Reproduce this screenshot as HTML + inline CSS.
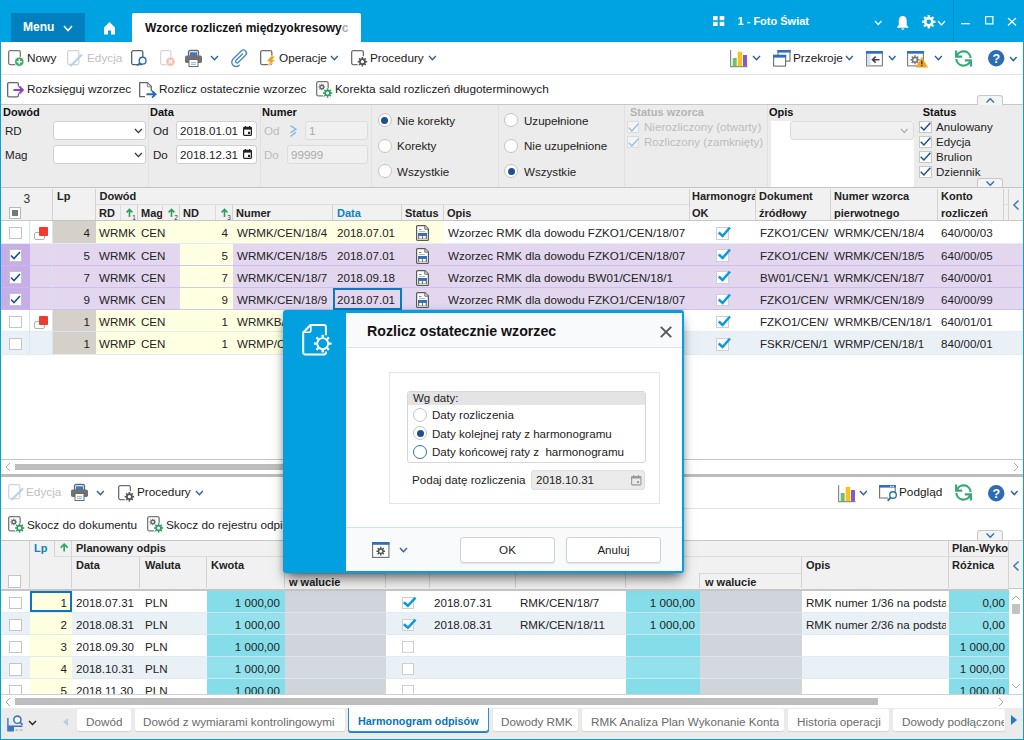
<!DOCTYPE html>
<html lang="pl">
<head>
<meta charset="utf-8">
<title>Wzorce rozliczeń międzyokresowych</title>
<style>
*{box-sizing:border-box;margin:0;padding:0}
html,body{width:1024px;height:740px;overflow:hidden;background:#fff}
body{position:relative;font-family:"Liberation Sans",sans-serif;font-size:11.6px;color:#222;line-height:1}
.a{position:absolute;white-space:nowrap}
.b{font-weight:bold;font-size:11px}
svg{position:absolute;overflow:visible}
/* title bar */
#title{left:0;top:0;width:1024px;height:42px;background:#00a3e1}
#menu{left:10.5px;top:13px;width:74px;height:29px;background:#027fbe}
#tab{left:132px;top:13px;width:229px;height:29px;background:#fff;border-radius:2px 2px 0 0}
.w{color:#fff}
/* toolbars */
.tb{font-size:11.8px;color:#1a1a1a}
.dis{color:#c0c0c0}
.hl{background:#e4e4e4;height:1px}
/* filter */
#filter{left:1px;top:104px;width:1022px;height:84px;background:#ececec;border-top:1px solid #c8c8c8}
.vs{width:1px;background:#e0e0e0;top:105px;height:82px}
.inp{background:#fff;border:1px solid #d0d0d0;border-radius:3px;height:19px}
.inpd{background:#f0f0f0;border:1px solid #dcdcdc;border-radius:3px;height:19px}
.rad{width:14px;height:14px;border-radius:50%;background:#fff;border:1px solid #c4c4c4}
.rad.on::after{content:"";position:absolute;left:2.5px;top:2.5px;width:7px;height:7px;border-radius:50%;background:#1d4f91}
.cb{width:12px;height:12px;background:#fff;border:1px solid #c8c8c8}
/* grid */
.gh{background:#f1f1f1}
.gl{background:#d2d2d2;width:1px}
.row{left:1px;width:1022px;height:22px}
.c{position:absolute;top:0;height:100%;line-height:22px;white-space:nowrap;overflow:hidden}
.r{text-align:right}
</style>
</head>
<body>
<!-- TITLE BAR -->
<div class="a" id="title"></div>
<div class="a" id="menu"></div>
<div class="a w b" style="left:23px;top:21px;font-size:12px">Menu</div>
<div class="a" id="tab"></div>
<div class="a b" style="left:145px;top:21.500px;font-size:12px;color:#111">Wzorce rozliczeń międzyokresowy<span style="color:#aaa">c</span></div>
<div class="a w b" style="left:737.5px;top:15.5px;font-size:11px">1 - Foto Świat</div>
<div class="a" style="left:953px;top:0;width:1px;height:42px;background:#0a8ccb"></div>

<!-- TOOLBAR 1 -->
<div class="a tb" style="left:27px;top:53px">Nowy</div>
<div class="a tb dis" style="left:87px;top:53px">Edycja</div>
<div class="a tb" style="left:279px;top:53px">Operacje</div>
<div class="a tb" style="left:370px;top:53px">Procedury</div>
<div class="a tb" style="left:793px;top:53px">Przekroje</div>
<div class="a hl" style="left:1px;top:74px;width:1022px"></div>
<!-- TOOLBAR 2 -->
<div class="a tb" style="left:27px;top:84px">Rozksięguj wzorzec</div>
<div class="a tb" style="left:159px;top:84px">Rozlicz ostatecznie wzorzec</div>
<div class="a tb" style="left:335px;top:84px">Korekta sald rozliczeń długoterminowych</div>

<!-- FILTER -->
<div class="a" id="filter"></div>
<!--FILTERCONTENT-->
<div class="a vs" style="left:148px"></div>
<div class="a vs" style="left:260px"></div>
<div class="a vs" style="left:371px"></div>
<div class="a vs" style="left:498px"></div>
<div class="a vs" style="left:624px"></div>
<div class="a vs" style="left:767px"></div>
<div class="a b" style="left:3px;top:107px;color:#111">Dowód</div>
<div class="a" style="left:5px;top:125px">RD</div>
<div class="a" style="left:5px;top:149px">Mag</div>
<div class="a inp" style="left:53px;top:121px;width:93px"></div>
<div class="a inp" style="left:53px;top:145px;width:93px"></div>
<div class="a b" style="left:150px;top:107px;color:#111">Data</div>
<div class="a" style="left:153px;top:125px">Od</div>
<div class="a" style="left:153px;top:149px">Do</div>
<div class="a inp" style="left:176px;top:121px;width:81px"></div>
<div class="a inp" style="left:176px;top:145px;width:81px"></div>
<div class="a" style="left:180px;top:125px">2018.01.01</div>
<div class="a" style="left:180px;top:149px">2018.12.31</div>
<div class="a b" style="left:262px;top:107px;color:#111">Numer</div>
<div class="a" style="left:264px;top:125px;color:#bbb">Od</div>
<div class="a" style="left:264px;top:149px;color:#bbb">Do</div>
<div class="a inpd" style="left:305px;top:121px;width:63px"></div>
<div class="a inpd" style="left:287px;top:145px;width:81px"></div>
<div class="a" style="left:309px;top:125px;color:#aaa">1</div>
<div class="a" style="left:291px;top:149px;color:#aaa">99999</div>
<div class="a rad on" style="left:377.600px;top:113.400px"></div>
<div class="a rad" style="left:377.600px;top:138.800px"></div>
<div class="a rad" style="left:377.600px;top:164.200px"></div>
<div class="a" style="left:397px;top:115px">Nie korekty</div>
<div class="a" style="left:397px;top:140px">Korekty</div>
<div class="a" style="left:397px;top:165.500px">Wszystkie</div>
<div class="a rad" style="left:504px;top:113.400px"></div>
<div class="a rad" style="left:504px;top:138.800px"></div>
<div class="a rad on" style="left:504px;top:164.200px"></div>
<div class="a" style="left:524px;top:115px">Uzupełnione</div>
<div class="a" style="left:524px;top:140px">Nie uzupełnione</div>
<div class="a" style="left:524px;top:165.500px">Wszystkie</div>
<div class="a b" style="left:630px;top:107px;color:#b4b4b4">Status wzorca</div>
<div class="a cb" style="left:627px;top:121px;border-color:#dcdcdc;background:#f4f4f4"></div>
<div class="a cb" style="left:627px;top:136px;border-color:#dcdcdc;background:#f4f4f4"></div>
<div class="a" style="left:644px;top:121px;color:#bcbcbc">Nierozliczony (otwarty)</div>
<div class="a" style="left:644px;top:136px;color:#bcbcbc">Rozliczony (zamknięty)</div>
<div class="a b" style="left:769px;top:107px;color:#111">Opis</div>
<div class="a" style="left:771px;top:121px;width:143px;height:67px;background:#fff"></div>
<div class="a inpd" style="left:790px;top:121px;width:124px"></div>
<div class="a b" style="left:922.700px;top:107px;color:#111">Status</div>
<div class="a cb" style="left:919.300px;top:121.3px;width:12.400px;height:12.200px"></div>
<div class="a cb" style="left:919.300px;top:136.3px;width:12.400px;height:12.200px"></div>
<div class="a cb" style="left:919.300px;top:151.3px;width:12.400px;height:12.200px"></div>
<div class="a cb" style="left:919.300px;top:166.3px;width:12.400px;height:12.200px"></div>
<div class="a" style="left:936px;top:121px">Anulowany</div>
<div class="a" style="left:936px;top:136px">Edycja</div>
<div class="a" style="left:936px;top:151px">Brulion</div>
<div class="a" style="left:936px;top:166px">Dziennik</div>
<div class="a" style="left:977px;top:95px;width:26px;height:10px;background:#f4f4f4;border:1px solid #c8c8c8;border-bottom:0;border-radius:3px 3px 0 0"></div>
<div class="a" style="left:977px;top:178px;width:26px;height:10px;background:#f4f4f4;border:1px solid #c8c8c8;border-bottom:0;border-radius:3px 3px 0 0"></div>
<!--/FILTERCONTENT-->

<!-- MAIN GRID -->
<!--MAINGRID-->
<div class="a gh" style="left:1px;top:187px;width:1022px;height:34px;border-top:1px solid #c4c4c4"></div>
<div class="a" style="left:1px;top:219.500px;width:1008px;height:2px;background:#c6c6c6"></div>
<div class="a gl" style="left:52px;top:189px;height:31px"></div>
<div class="a gl" style="left:95px;top:189px;height:31px"></div>
<div class="a gl" style="left:137px;top:205px;height:15px"></div>
<div class="a gl" style="left:179px;top:205px;height:15px"></div>
<div class="a gl" style="left:232px;top:205px;height:15px"></div>
<div class="a gl" style="left:332px;top:205px;height:15px"></div>
<div class="a gl" style="left:401px;top:205px;height:15px"></div>
<div class="a gl" style="left:443px;top:205px;height:15px"></div>
<div class="a gl" style="left:689px;top:189px;height:31px"></div>
<div class="a gl" style="left:755px;top:189px;height:31px"></div>
<div class="a gl" style="left:830px;top:189px;height:31px"></div>
<div class="a gl" style="left:937px;top:189px;height:31px"></div>
<div class="a gl" style="left:1003px;top:189px;height:31px"></div>
<div class="a gl" style="left:1008px;top:189px;height:33px"></div>
<div class="a" style="left:96px;top:204px;width:593px;height:1px;background:#dedede"></div>
<div class="a" style="left:1009px;top:220px;width:14px;height:1px;background:#c6c6c6"></div>
<div class="a" style="left:23.5px;top:192.500px;font-size:12px;color:#333">3</div>
<div class="a cb" style="left:8.600px;top:206.600px;width:12.200px;height:12.200px;border-color:#b8b8b8"></div><div class="a" style="left:11.800px;top:209.800px;width:5.800px;height:5.800px;background:#777"></div>
<div class="a b" style="left:57px;top:190.5px;color:#222;font-size:11px">Lp</div>
<div class="a b" style="left:99.5px;top:190.5px;color:#222;font-size:11px">Dowód</div>
<div class="a b" style="left:99px;top:207.5px;color:#222;font-size:11px">RD</div>
<div class="a b" style="left:141px;top:207.5px;color:#222;font-size:11px;width:21px;overflow:hidden;padding-bottom:4px">Mag</div>
<div class="a b" style="left:183px;top:207.5px;color:#222;font-size:11px">ND</div>
<div class="a b" style="left:236px;top:207.5px;color:#222;font-size:11px">Numer</div>
<div class="a b" style="left:405px;top:207.5px;color:#222;font-size:11px">Status</div>
<div class="a b" style="left:447px;top:207.5px;color:#222;font-size:11px">Opis</div>
<div class="a b" style="left:692px;top:190.5px;color:#222;font-size:11px;width:63px;overflow:hidden;padding-bottom:4px">Harmonogram</div>
<div class="a b" style="left:692px;top:207.5px;color:#222;font-size:11px">OK</div>
<div class="a b" style="left:759px;top:190.5px;color:#222;font-size:11px">Dokument</div>
<div class="a b" style="left:759px;top:207.5px;color:#222;font-size:11px">źródłowy</div>
<div class="a b" style="left:834px;top:190.5px;color:#222;font-size:11px">Numer wzorca</div>
<div class="a b" style="left:834px;top:207.5px;color:#222;font-size:11px">pierwotnego</div>
<div class="a b" style="left:941px;top:190.5px;color:#222;font-size:11px">Konto</div>
<div class="a b" style="left:941px;top:207.5px;color:#222;font-size:11px">rozliczeń</div>
<div class="a b" style="left:337px;top:207.5px;color:#0a84c8;font-size:11px">Data</div>
<div class="a row" style="top:221.3px;height:22.2px;background:#fff">
<div class="c r" style="left:52px;width:43px;background:#d5d1ca;padding-right:6px;line-height:24px">4</div>
<div class="c " style="left:95px;width:42px;background:#ffffe2;padding-left:3px;line-height:24px">WRMK</div>
<div class="c " style="left:137px;width:42px;background:#ffffe2;padding-left:3px;line-height:24px">CEN</div>
<div class="c r" style="left:179px;width:53px;background:#ffffe2;padding-right:5px;line-height:24px">4</div>
<div class="c " style="left:232px;width:100px;background:#ffffe2;padding-left:4px;line-height:24px">WRMK/CEN/18/4</div>
<div class="c " style="left:332px;width:69px;background:#ffffe2;padding-left:4px;line-height:24px">2018.07.01</div>
<div class="c " style="left:401px;width:42px;background:#ffffe2;padding-left:4px;line-height:24px"></div>
<div class="c " style="left:443px;width:246px;padding-left:4px;line-height:24px">Wzorzec RMK dla dowodu FZKO1/CEN/18/07</div>
<div class="c " style="left:755px;width:75px;padding-left:4px;width:74px;line-height:24px">FZKO1/CEN/</div>
<div class="c " style="left:830px;width:107px;padding-left:3px;line-height:24px">WRMK/CEN/18/4</div>
<div class="c " style="left:937px;width:66px;padding-left:3px;line-height:24px">640/00/03</div>
<div class="cb" style="position:absolute;left:8.3px;top:5.500px;width:12.700px;height:12.700px;border-color:#c4c4c4"></div>
<div style="position:absolute;left:33px;top:10.500px;width:11px;height:8px;border:1px solid #b0b0b0;border-radius:2px;background:#fff"></div><div style="position:absolute;left:38px;top:6.200px;width:9px;height:8.500px;background:#f0392f;border-radius:1px"></div>
<svg style="left:414.7px;top:4.100px" width="13" height="16" viewBox="0 0 13 16"><path d="M.6 1.600a1 1 0 0 1 1 -1h7.400l3.400 3.400v10.400a1 1 0 0 1 -1 1h-9.800a1 1 0 0 1 -1 -1z" fill="#fff" stroke="#5a5a5a" stroke-width="1.200"/><path d="M8.800 .8v3.400h3.400" fill="#e8e8e8" stroke="#5a5a5a" stroke-width=".9"/><rect x="3" y="4" width="2.500" height="1" fill="#888"/><rect x="3" y="6" width="6" height=".8" fill="#aaa"/><rect x="2" y="8" width="9" height="3" fill="#2f6fc0"/><rect x="2" y="10.500" width="9" height="3.500" fill="#777"/><rect x="3.200" y="11" width="2.700" height="2.600" fill="#fff"/><rect x="7" y="11" width="2.700" height="2.600" fill="#fff"/></svg>
<div style="position:absolute;left:715.2px;top:5.800px;width:12.7px;height:12.5px;border:1px solid #cfcfcf;background:#fff"></div><svg style="left:716px;top:4.700px" width="15" height="12" viewBox="0 0 15 12"><path d="M1.700 6.600 L5.600 10 L13 1.500" fill="none" stroke="#0d9be0" stroke-width="2.600"/></svg>
</div>
<div class="a" style="left:1px;top:242.5px;width:1022px;height:1px;background:#dbe7f2;opacity:.8"></div>
<div class="a row" style="top:243.5px;height:22.2px;background:#e2d7ef">
<div class="c " style="left:0px;width:29px;background:#c7aee8;padding-left:4px;line-height:24px"></div>
<div class="c r" style="left:52px;width:43px;padding-right:6px;line-height:24px">5</div>
<div class="c " style="left:95px;width:42px;padding-left:3px;line-height:24px">WRMK</div>
<div class="c " style="left:137px;width:42px;padding-left:3px;line-height:24px">CEN</div>
<div class="c r" style="left:179px;width:53px;background:#ffffe2;padding-right:5px;line-height:24px">5</div>
<div class="c " style="left:232px;width:100px;padding-left:4px;line-height:24px">WRMK/CEN/18/5</div>
<div class="c " style="left:332px;width:69px;padding-left:4px;line-height:24px">2018.07.01</div>
<div class="c " style="left:443px;width:246px;padding-left:4px;line-height:24px">Wzorzec RMK dla dowodu FZKO1/CEN/18/07</div>
<div class="c " style="left:755px;width:75px;padding-left:4px;width:74px;line-height:24px">FZKO1/CEN/</div>
<div class="c " style="left:830px;width:107px;padding-left:3px;line-height:24px">WRMK/CEN/18/5</div>
<div class="c " style="left:937px;width:66px;padding-left:3px;line-height:24px">640/00/05</div>
<div class="cb" style="position:absolute;left:8.3px;top:5.500px;width:12.700px;height:12.700px;border-color:#c4c4c4"></div>
<svg style="left:9px;top:7px" width="11" height="9" viewBox="0 0 11 9"><path d="M1 4.5 L4 7.5 L10 1" fill="none" stroke="#1d4f91" stroke-width="1.6"/></svg>
<svg style="left:414.7px;top:4.100px" width="13" height="16" viewBox="0 0 13 16"><path d="M.6 1.600a1 1 0 0 1 1 -1h7.400l3.400 3.400v10.400a1 1 0 0 1 -1 1h-9.800a1 1 0 0 1 -1 -1z" fill="#fff" stroke="#5a5a5a" stroke-width="1.200"/><path d="M8.800 .8v3.400h3.400" fill="#e8e8e8" stroke="#5a5a5a" stroke-width=".9"/><rect x="3" y="4" width="2.500" height="1" fill="#888"/><rect x="3" y="6" width="6" height=".8" fill="#aaa"/><rect x="2" y="8" width="9" height="3" fill="#2f6fc0"/><rect x="2" y="10.500" width="9" height="3.500" fill="#777"/><rect x="3.200" y="11" width="2.700" height="2.600" fill="#fff"/><rect x="7" y="11" width="2.700" height="2.600" fill="#fff"/></svg>
<div style="position:absolute;left:715.2px;top:5.800px;width:12.7px;height:12.5px;border:1px solid #cfcfcf;background:#fff"></div><svg style="left:716px;top:4.700px" width="15" height="12" viewBox="0 0 15 12"><path d="M1.700 6.600 L5.600 10 L13 1.500" fill="none" stroke="#0d9be0" stroke-width="2.600"/></svg>
</div>
<div class="a" style="left:1px;top:264.7px;width:1022px;height:1px;background:#cdb8ec;opacity:.8"></div>
<div class="a row" style="top:265.7px;height:22.2px;background:#e2d7ef">
<div class="c " style="left:0px;width:29px;background:#c7aee8;padding-left:4px;line-height:24px"></div>
<div class="c r" style="left:52px;width:43px;padding-right:6px;line-height:24px">7</div>
<div class="c " style="left:95px;width:42px;padding-left:3px;line-height:24px">WRMK</div>
<div class="c " style="left:137px;width:42px;padding-left:3px;line-height:24px">CEN</div>
<div class="c r" style="left:179px;width:53px;background:#ffffe2;padding-right:5px;line-height:24px">7</div>
<div class="c " style="left:232px;width:100px;padding-left:4px;line-height:24px">WRMK/CEN/18/7</div>
<div class="c " style="left:332px;width:69px;padding-left:4px;line-height:24px">2018.09.18</div>
<div class="c " style="left:443px;width:246px;padding-left:4px;line-height:24px">Wzorzec RMK dla dowodu BW01/CEN/18/1</div>
<div class="c " style="left:755px;width:75px;padding-left:4px;width:74px;line-height:24px">BW01/CEN/1</div>
<div class="c " style="left:830px;width:107px;padding-left:3px;line-height:24px">WRMK/CEN/18/7</div>
<div class="c " style="left:937px;width:66px;padding-left:3px;line-height:24px">640/00/01</div>
<div class="cb" style="position:absolute;left:8.3px;top:5.500px;width:12.700px;height:12.700px;border-color:#c4c4c4"></div>
<svg style="left:9px;top:7px" width="11" height="9" viewBox="0 0 11 9"><path d="M1 4.5 L4 7.5 L10 1" fill="none" stroke="#1d4f91" stroke-width="1.6"/></svg>
<svg style="left:414.7px;top:4.100px" width="13" height="16" viewBox="0 0 13 16"><path d="M.6 1.600a1 1 0 0 1 1 -1h7.400l3.400 3.400v10.400a1 1 0 0 1 -1 1h-9.800a1 1 0 0 1 -1 -1z" fill="#fff" stroke="#5a5a5a" stroke-width="1.200"/><path d="M8.800 .8v3.400h3.400" fill="#e8e8e8" stroke="#5a5a5a" stroke-width=".9"/><rect x="3" y="4" width="2.500" height="1" fill="#888"/><rect x="3" y="6" width="6" height=".8" fill="#aaa"/><rect x="2" y="8" width="9" height="3" fill="#2f6fc0"/><rect x="2" y="10.500" width="9" height="3.500" fill="#777"/><rect x="3.200" y="11" width="2.700" height="2.600" fill="#fff"/><rect x="7" y="11" width="2.700" height="2.600" fill="#fff"/></svg>
<div style="position:absolute;left:715.2px;top:5.800px;width:12.7px;height:12.5px;border:1px solid #cfcfcf;background:#fff"></div><svg style="left:716px;top:4.700px" width="15" height="12" viewBox="0 0 15 12"><path d="M1.700 6.600 L5.600 10 L13 1.500" fill="none" stroke="#0d9be0" stroke-width="2.600"/></svg>
</div>
<div class="a" style="left:1px;top:286.9px;width:1022px;height:1px;background:#cdb8ec;opacity:.8"></div>
<div class="a row" style="top:287.9px;height:22.2px;background:#e2d7ef">
<div class="c " style="left:0px;width:29px;background:#c7aee8;padding-left:4px;line-height:24px"></div>
<div class="c r" style="left:52px;width:43px;padding-right:6px;line-height:24px">9</div>
<div class="c " style="left:95px;width:42px;padding-left:3px;line-height:24px">WRMK</div>
<div class="c " style="left:137px;width:42px;padding-left:3px;line-height:24px">CEN</div>
<div class="c r" style="left:179px;width:53px;background:#ffffe2;padding-right:5px;line-height:24px">9</div>
<div class="c " style="left:232px;width:100px;padding-left:4px;line-height:24px">WRMK/CEN/18/9</div>
<div class="c " style="left:332px;width:69px;padding-left:4px;line-height:24px">2018.07.01</div>
<div class="c " style="left:443px;width:246px;padding-left:4px;line-height:24px">Wzorzec RMK dla dowodu FZKO1/CEN/18/07</div>
<div class="c " style="left:755px;width:75px;padding-left:4px;width:74px;line-height:24px">FZKO1/CEN/</div>
<div class="c " style="left:830px;width:107px;padding-left:3px;line-height:24px">WRMK/CEN/18/9</div>
<div class="c " style="left:937px;width:66px;padding-left:3px;line-height:24px">640/00/99</div>
<div class="cb" style="position:absolute;left:8.3px;top:5.500px;width:12.700px;height:12.700px;border-color:#c4c4c4"></div>
<svg style="left:9px;top:7px" width="11" height="9" viewBox="0 0 11 9"><path d="M1 4.5 L4 7.5 L10 1" fill="none" stroke="#1d4f91" stroke-width="1.6"/></svg>
<svg style="left:414.7px;top:4.100px" width="13" height="16" viewBox="0 0 13 16"><path d="M.6 1.600a1 1 0 0 1 1 -1h7.400l3.400 3.400v10.400a1 1 0 0 1 -1 1h-9.800a1 1 0 0 1 -1 -1z" fill="#fff" stroke="#5a5a5a" stroke-width="1.200"/><path d="M8.800 .8v3.400h3.400" fill="#e8e8e8" stroke="#5a5a5a" stroke-width=".9"/><rect x="3" y="4" width="2.500" height="1" fill="#888"/><rect x="3" y="6" width="6" height=".8" fill="#aaa"/><rect x="2" y="8" width="9" height="3" fill="#2f6fc0"/><rect x="2" y="10.500" width="9" height="3.500" fill="#777"/><rect x="3.200" y="11" width="2.700" height="2.600" fill="#fff"/><rect x="7" y="11" width="2.700" height="2.600" fill="#fff"/></svg>
<div style="position:absolute;left:715.2px;top:5.800px;width:12.7px;height:12.5px;border:1px solid #cfcfcf;background:#fff"></div><svg style="left:716px;top:4.700px" width="15" height="12" viewBox="0 0 15 12"><path d="M1.700 6.600 L5.600 10 L13 1.500" fill="none" stroke="#0d9be0" stroke-width="2.600"/></svg>
</div>
<div class="a" style="left:1px;top:309.1px;width:1022px;height:1px;background:#cdb8ec;opacity:.8"></div>
<div class="a row" style="top:310.1px;height:22.2px;background:#fff">
<div class="c r" style="left:52px;width:43px;background:#d5d1ca;padding-right:6px;line-height:24px">1</div>
<div class="c " style="left:95px;width:42px;background:#ffffe2;padding-left:3px;line-height:24px">WRMK</div>
<div class="c " style="left:137px;width:42px;background:#ffffe2;padding-left:3px;line-height:24px">CEN</div>
<div class="c r" style="left:179px;width:53px;background:#ffffe2;padding-right:5px;line-height:24px">1</div>
<div class="c " style="left:232px;width:100px;background:#ffffe2;padding-left:4px;line-height:24px">WRMKB/CEN/18/1</div>
<div class="c " style="left:332px;width:69px;background:#ffffe2;padding-left:4px;line-height:24px">2018.07.01</div>
<div class="c " style="left:401px;width:42px;background:#ffffe2;padding-left:4px;line-height:24px"></div>
<div class="c " style="left:443px;width:239px;padding-left:4px;line-height:24px">Wzorzec RMK dla dowodu FZKO1/CEN/18/07</div>
<div class="c " style="left:755px;width:75px;padding-left:4px;width:74px;line-height:24px">FZKO1/CEN/</div>
<div class="c " style="left:830px;width:107px;padding-left:3px;line-height:24px">WRMKB/CEN/18/1</div>
<div class="c " style="left:937px;width:66px;padding-left:3px;line-height:24px">640/01/01</div>
<div class="cb" style="position:absolute;left:8.3px;top:5.500px;width:12.700px;height:12.700px;border-color:#c4c4c4"></div>
<div style="position:absolute;left:33px;top:10.500px;width:11px;height:8px;border:1px solid #b0b0b0;border-radius:2px;background:#fff"></div><div style="position:absolute;left:38px;top:6.200px;width:9px;height:8.500px;background:#f0392f;border-radius:1px"></div>
<svg style="left:414.7px;top:4.100px" width="13" height="16" viewBox="0 0 13 16"><path d="M.6 1.600a1 1 0 0 1 1 -1h7.400l3.400 3.400v10.400a1 1 0 0 1 -1 1h-9.800a1 1 0 0 1 -1 -1z" fill="#fff" stroke="#5a5a5a" stroke-width="1.200"/><path d="M8.800 .8v3.400h3.400" fill="#e8e8e8" stroke="#5a5a5a" stroke-width=".9"/><rect x="3" y="4" width="2.500" height="1" fill="#888"/><rect x="3" y="6" width="6" height=".8" fill="#aaa"/><rect x="2" y="8" width="9" height="3" fill="#2f6fc0"/><rect x="2" y="10.500" width="9" height="3.500" fill="#777"/><rect x="3.200" y="11" width="2.700" height="2.600" fill="#fff"/><rect x="7" y="11" width="2.700" height="2.600" fill="#fff"/></svg>
<div style="position:absolute;left:715.2px;top:5.800px;width:12.7px;height:12.5px;border:1px solid #cfcfcf;background:#fff"></div><svg style="left:716px;top:4.700px" width="15" height="12" viewBox="0 0 15 12"><path d="M1.700 6.600 L5.600 10 L13 1.500" fill="none" stroke="#0d9be0" stroke-width="2.600"/></svg>
</div>
<div class="a" style="left:1px;top:331.3px;width:1022px;height:1px;background:#dbe7f2;opacity:.8"></div>
<div class="a row" style="top:332.3px;height:22.2px;background:#e9f1f6">
<div class="c r" style="left:52px;width:43px;background:#d5d1ca;padding-right:6px;line-height:24px">1</div>
<div class="c " style="left:95px;width:42px;background:#ffffe2;padding-left:3px;line-height:24px">WRMP</div>
<div class="c " style="left:137px;width:42px;background:#ffffe2;padding-left:3px;line-height:24px">CEN</div>
<div class="c r" style="left:179px;width:53px;background:#ffffe2;padding-right:5px;line-height:24px">1</div>
<div class="c " style="left:232px;width:100px;background:#ffffe2;padding-left:4px;line-height:24px">WRMP/CEN/18/1</div>
<div class="c " style="left:332px;width:69px;background:#ffffe2;padding-left:4px;line-height:24px">2018.07.01</div>
<div class="c " style="left:401px;width:42px;background:#ffffe2;padding-left:4px;line-height:24px"></div>
<div class="c " style="left:443px;width:239px;padding-left:4px;line-height:24px">Wzorzec RMK dla dowodu FSKR/CEN/18/1</div>
<div class="c " style="left:755px;width:75px;padding-left:4px;width:74px;line-height:24px">FSKR/CEN/1</div>
<div class="c " style="left:830px;width:107px;padding-left:3px;line-height:24px">WRMP/CEN/18/1</div>
<div class="c " style="left:937px;width:66px;padding-left:3px;line-height:24px">840/00/01</div>
<div class="cb" style="position:absolute;left:8.3px;top:5.500px;width:12.700px;height:12.700px;border-color:#c4c4c4"></div>
<svg style="left:414.7px;top:4.100px" width="13" height="16" viewBox="0 0 13 16"><path d="M.6 1.600a1 1 0 0 1 1 -1h7.400l3.400 3.400v10.400a1 1 0 0 1 -1 1h-9.800a1 1 0 0 1 -1 -1z" fill="#fff" stroke="#5a5a5a" stroke-width="1.200"/><path d="M8.800 .8v3.400h3.400" fill="#e8e8e8" stroke="#5a5a5a" stroke-width=".9"/><rect x="3" y="4" width="2.500" height="1" fill="#888"/><rect x="3" y="6" width="6" height=".8" fill="#aaa"/><rect x="2" y="8" width="9" height="3" fill="#2f6fc0"/><rect x="2" y="10.500" width="9" height="3.500" fill="#777"/><rect x="3.200" y="11" width="2.700" height="2.600" fill="#fff"/><rect x="7" y="11" width="2.700" height="2.600" fill="#fff"/></svg>
<div style="position:absolute;left:715.2px;top:5.800px;width:12.7px;height:12.5px;border:1px solid #cfcfcf;background:#fff"></div><svg style="left:716px;top:4.700px" width="15" height="12" viewBox="0 0 15 12"><path d="M1.700 6.600 L5.600 10 L13 1.500" fill="none" stroke="#0d9be0" stroke-width="2.600"/></svg>
</div>
<div class="a" style="left:1px;top:353.5px;width:1022px;height:1px;background:#dbe7f2;opacity:.8"></div>
<div class="a" style="left:29px;top:221.3px;width:1px;height:22.2px;background:#d6e6f5"></div>
<div class="a" style="left:52px;top:221.3px;width:1px;height:22.2px;background:#d6e6f5"></div>
<div class="a" style="left:29px;top:310.1px;width:1px;height:44.4px;background:#d6e6f5"></div>
<div class="a" style="left:52px;top:310.1px;width:1px;height:44.4px;background:#d6e6f5"></div>
<div class="a" style="left:52px;top:243.500px;width:1px;height:66.600px;background:#d9dff2;opacity:.7"></div>
<div class="a" style="left:333px;top:287.900px;width:69px;height:22.200px;border:2.500px solid #0c79be"></div>
<svg style="left:1013px;top:200px" width="6" height="10" viewBox="0 0 6 10"><path d="M5.500 .5 L.9 5 L5.500 9.500" fill="none" stroke="#3a78c0" stroke-width="1.500"/></svg>
<div class="a" style="left:1004px;top:204px;width:4px;height:1px;background:#dedede"></div>
<div class="a" style="left:1px;top:459px;width:1022px;height:1px;background:#c4c4c4"></div>
<div class="a" style="left:15px;top:463.500px;width:600px;height:6.300px;background:#bdbdbd"></div>
<svg style="left:5px;top:462px" width="6" height="10" viewBox="0 0 6 10"><path d="M5 1 L1 5 L5 9" fill="none" stroke="#aaa" stroke-width="1"/></svg>
<svg style="left:1013px;top:462px" width="6" height="10" viewBox="0 0 6 10"><path d="M1 1 L5 5 L1 9" fill="none" stroke="#aaa" stroke-width="1"/></svg>
<div class="a" style="left:1px;top:474px;width:1022px;height:3px;background:#bdbdbd"></div>
<!--/MAINGRID-->

<!-- BOTTOM -->
<!--BOTTOM-->
<div class="a tb dis" style="left:26px;top:487px">Edycja</div>
<div class="a tb" style="left:137px;top:487px">Procedury</div>
<div class="a tb" style="left:899px;top:487px">Podgląd</div>
<div class="a hl" style="left:1px;top:508px;width:1022px"></div>
<div class="a tb" style="left:27px;top:519.5px">Skocz do dokumentu</div>
<div class="a tb" style="left:166px;top:519.5px">Skocz do rejestru odpisów</div>
<div class="a" style="left:977px;top:530px;width:26px;height:10px;background:#f4f4f4;border:1px solid #c8c8c8;border-bottom:0;border-radius:3px 3px 0 0"></div>
<div class="a gh" style="left:1px;top:539.500px;width:1022px;height:49.500px;border-top:1px solid #c8c8c8"></div>
<div class="a" style="left:1px;top:588.500px;width:1008px;height:2px;background:#c6c6c6"></div>
<div class="a" style="left:1009px;top:588px;width:14px;height:1px;background:#c6c6c6"></div>
<div class="a gl" style="left:29px;top:541px;height:47px"></div>
<div class="a gl" style="left:54px;top:541px;height:16px"></div>
<div class="a gl" style="left:71px;top:541px;height:47px"></div>
<div class="a gl" style="left:139px;top:557px;height:31px"></div>
<div class="a gl" style="left:206px;top:557px;height:31px"></div>
<div class="a gl" style="left:284px;top:573px;height:15px"></div>
<div class="a gl" style="left:385px;top:541px;height:47px"></div>
<div class="a gl" style="left:429px;top:557px;height:31px"></div>
<div class="a gl" style="left:515px;top:557px;height:31px"></div>
<div class="a gl" style="left:625px;top:557px;height:31px"></div>
<div class="a gl" style="left:699px;top:573px;height:15px"></div>
<div class="a gl" style="left:801px;top:557px;height:31px"></div>
<div class="a gl" style="left:948px;top:541px;height:47px"></div>
<div class="a gl" style="left:1008px;top:541px;height:49px"></div>
<div class="a" style="left:54px;top:556px;width:954px;height:1px;background:#dcdcdc"></div>
<div class="a" style="left:285px;top:572.500px;width:100px;height:1px;background:#dcdcdc"></div>
<div class="a" style="left:700px;top:572.500px;width:101px;height:1px;background:#dcdcdc"></div>
<div class="a b" style="left:34px;top:543px;color:#0a84c8;font-size:11px">Lp</div>
<svg style="left:59.500px;top:543.300px" width="8.400" height="9" viewBox="0 0 8.400 9"><path d="M4.200 8.600V1.200M.7 4.700 L4.200 1.200 L7.700 4.700" fill="none" stroke="#35a46a" stroke-width="1.700"/></svg>
<div class="a b" style="left:76px;top:543px;color:#222;font-size:11px">Planowany odpis</div>
<div class="a b" style="left:76px;top:560px;color:#222;font-size:11px">Data</div>
<div class="a b" style="left:145px;top:560px;color:#222;font-size:11px">Waluta</div>
<div class="a b" style="left:211px;top:560px;color:#222;font-size:11px">Kwota</div>
<div class="a b" style="left:289px;top:577px;color:#222;font-size:11px">w walucie</div>
<div class="a b" style="left:705px;top:577px;color:#222;font-size:11px">w walucie</div>
<div class="a b" style="left:806px;top:560px;color:#222;font-size:11px">Opis</div>
<div class="a b" style="left:952px;top:560px;color:#222;font-size:11px">Różnica</div>
<div class="a b" style="left:952px;top:543px;color:#222;font-size:11px;width:56px;overflow:hidden;padding-bottom:4px">Plan-Wykonanie</div>
<div class="a cb" style="left:8px;top:575px;width:13px;height:13px;border-color:#c4c4c4"></div>
<svg style="left:1013px;top:560.500px" width="6" height="10" viewBox="0 0 6 10"><path d="M5.500 .5 L.9 5 L5.500 9.500" fill="none" stroke="#3a78c0" stroke-width="1.500"/></svg>
<div class="a" style="left:1px;top:590.500px;width:1008px;height:103.500px;overflow:hidden">
<div class="a row" style="left:0;top:0.0px;width:1008px;height:22.2px;background:#fff">
<div class="c r" style="left:29px;width:42px;background:#ffffe2;padding-right:5px;line-height:23px">1</div>
<div class="c " style="left:71px;width:68px;padding-left:4px;line-height:23px">2018.07.31</div>
<div class="c " style="left:139px;width:67px;padding-left:5px;line-height:23px">PLN</div>
<div class="c r" style="left:206px;width:78px;background:#84dde9;padding-right:5px;line-height:23px">1 000,00</div>
<div class="c " style="left:284px;width:101px;background:#cfd5db;padding-left:5px;line-height:23px"></div>
<div class="c " style="left:429px;width:86px;padding-left:4px;line-height:23px">2018.07.31</div>
<div class="c " style="left:515px;width:110px;padding-left:4px;line-height:23px">RMK/CEN/18/7</div>
<div class="c r" style="left:625px;width:74px;background:#84dde9;padding-right:5px;line-height:23px">1 000,00</div>
<div class="c " style="left:699px;width:102px;background:#cfd5db;padding-left:5px;line-height:23px"></div>
<div class="c " style="left:801px;width:144px;padding-left:4px;line-height:23px">RMK numer 1/36 na podstawie</div>
<div class="c r" style="left:948px;width:60px;background:#84dde9;padding-right:4px;line-height:23px">0,00</div>
<div class="cb" style="position:absolute;left:8.2px;top:6px;width:12.5px;height:12.5px;border-color:#c4c4c4"></div>
<div style="position:absolute;left:400.5px;top:6.2px;width:12.3px;height:12px;border:1px solid #cfcfcf;background:#fff"></div>
<svg style="left:401px;top:5px" width="15" height="12" viewBox="0 0 15 12"><path d="M1.800 6.200 L5.900 9.800 L13.500 1.700" fill="none" stroke="#0d9be0" stroke-width="2.600"/></svg>
</div>
<div class="a" style="left:0;top:21.2px;width:1008px;height:1px;background:#dbe7f2;opacity:.8"></div>
<div class="a row" style="left:0;top:22.2px;width:1008px;height:22.2px;background:#e9f1f6">
<div class="c r" style="left:29px;width:42px;background:#ffffe2;padding-right:5px;line-height:23px">2</div>
<div class="c " style="left:71px;width:68px;padding-left:4px;line-height:23px">2018.08.31</div>
<div class="c " style="left:139px;width:67px;padding-left:5px;line-height:23px">PLN</div>
<div class="c r" style="left:206px;width:78px;background:#93e1ec;padding-right:5px;line-height:23px">1 000,00</div>
<div class="c " style="left:284px;width:101px;background:#d3d9df;padding-left:5px;line-height:23px"></div>
<div class="c " style="left:429px;width:86px;padding-left:4px;line-height:23px">2018.08.31</div>
<div class="c " style="left:515px;width:110px;padding-left:4px;line-height:23px">RMK/CEN/18/11</div>
<div class="c r" style="left:625px;width:74px;background:#93e1ec;padding-right:5px;line-height:23px">1 000,00</div>
<div class="c " style="left:699px;width:102px;background:#d3d9df;padding-left:5px;line-height:23px"></div>
<div class="c " style="left:801px;width:144px;padding-left:4px;line-height:23px">RMK numer 2/36 na podstawie</div>
<div class="c r" style="left:948px;width:60px;background:#93e1ec;padding-right:4px;line-height:23px">0,00</div>
<div class="cb" style="position:absolute;left:8.2px;top:6px;width:12.5px;height:12.5px;border-color:#c4c4c4"></div>
<div style="position:absolute;left:400.5px;top:6.2px;width:12.3px;height:12px;border:1px solid #cfcfcf;background:#fff"></div>
<svg style="left:401px;top:5px" width="15" height="12" viewBox="0 0 15 12"><path d="M1.800 6.200 L5.900 9.800 L13.500 1.700" fill="none" stroke="#0d9be0" stroke-width="2.600"/></svg>
</div>
<div class="a" style="left:0;top:43.4px;width:1008px;height:1px;background:#dbe7f2;opacity:.8"></div>
<div class="a row" style="left:0;top:44.4px;width:1008px;height:22.2px;background:#fff">
<div class="c r" style="left:29px;width:42px;background:#ffffe2;padding-right:5px;line-height:23px">3</div>
<div class="c " style="left:71px;width:68px;padding-left:4px;line-height:23px">2018.09.30</div>
<div class="c " style="left:139px;width:67px;padding-left:5px;line-height:23px">PLN</div>
<div class="c r" style="left:206px;width:78px;background:#84dde9;padding-right:5px;line-height:23px">1 000,00</div>
<div class="c " style="left:284px;width:101px;background:#cfd5db;padding-left:5px;line-height:23px"></div>
<div class="c " style="left:429px;width:86px;padding-left:4px;line-height:23px"></div>
<div class="c " style="left:515px;width:110px;padding-left:4px;line-height:23px"></div>
<div class="c r" style="left:625px;width:74px;background:#84dde9;padding-right:5px;line-height:23px"></div>
<div class="c " style="left:699px;width:102px;background:#cfd5db;padding-left:5px;line-height:23px"></div>
<div class="c " style="left:801px;width:144px;padding-left:4px;line-height:23px"></div>
<div class="c r" style="left:948px;width:60px;background:#84dde9;padding-right:4px;line-height:23px">1 000,00</div>
<div class="cb" style="position:absolute;left:8.2px;top:6px;width:12.5px;height:12.5px;border-color:#c4c4c4"></div>
<div style="position:absolute;left:400.5px;top:6.2px;width:12.3px;height:12px;border:1px solid #cfcfcf;background:#fff"></div>
</div>
<div class="a" style="left:0;top:65.6px;width:1008px;height:1px;background:#dbe7f2;opacity:.8"></div>
<div class="a row" style="left:0;top:66.6px;width:1008px;height:22.2px;background:#e9f1f6">
<div class="c r" style="left:29px;width:42px;background:#ffffe2;padding-right:5px;line-height:23px">4</div>
<div class="c " style="left:71px;width:68px;padding-left:4px;line-height:23px">2018.10.31</div>
<div class="c " style="left:139px;width:67px;padding-left:5px;line-height:23px">PLN</div>
<div class="c r" style="left:206px;width:78px;background:#93e1ec;padding-right:5px;line-height:23px">1 000,00</div>
<div class="c " style="left:284px;width:101px;background:#d3d9df;padding-left:5px;line-height:23px"></div>
<div class="c " style="left:429px;width:86px;padding-left:4px;line-height:23px"></div>
<div class="c " style="left:515px;width:110px;padding-left:4px;line-height:23px"></div>
<div class="c r" style="left:625px;width:74px;background:#93e1ec;padding-right:5px;line-height:23px"></div>
<div class="c " style="left:699px;width:102px;background:#d3d9df;padding-left:5px;line-height:23px"></div>
<div class="c " style="left:801px;width:144px;padding-left:4px;line-height:23px"></div>
<div class="c r" style="left:948px;width:60px;background:#93e1ec;padding-right:4px;line-height:23px">1 000,00</div>
<div class="cb" style="position:absolute;left:8.2px;top:6px;width:12.5px;height:12.5px;border-color:#c4c4c4"></div>
<div style="position:absolute;left:400.5px;top:6.2px;width:12.3px;height:12px;border:1px solid #cfcfcf;background:#fff"></div>
</div>
<div class="a" style="left:0;top:87.8px;width:1008px;height:1px;background:#dbe7f2;opacity:.8"></div>
<div class="a row" style="left:0;top:88.8px;width:1008px;height:22.2px;background:#fff">
<div class="c r" style="left:29px;width:42px;background:#ffffe2;padding-right:5px;line-height:23px">5</div>
<div class="c " style="left:71px;width:68px;padding-left:4px;line-height:23px">2018.11.30</div>
<div class="c " style="left:139px;width:67px;padding-left:5px;line-height:23px">PLN</div>
<div class="c r" style="left:206px;width:78px;background:#84dde9;padding-right:5px;line-height:23px">1 000,00</div>
<div class="c " style="left:284px;width:101px;background:#cfd5db;padding-left:5px;line-height:23px"></div>
<div class="c " style="left:429px;width:86px;padding-left:4px;line-height:23px"></div>
<div class="c " style="left:515px;width:110px;padding-left:4px;line-height:23px"></div>
<div class="c r" style="left:625px;width:74px;background:#84dde9;padding-right:5px;line-height:23px"></div>
<div class="c " style="left:699px;width:102px;background:#cfd5db;padding-left:5px;line-height:23px"></div>
<div class="c " style="left:801px;width:144px;padding-left:4px;line-height:23px"></div>
<div class="c r" style="left:948px;width:60px;background:#84dde9;padding-right:4px;line-height:23px">1 000,00</div>
<div class="cb" style="position:absolute;left:8.2px;top:6px;width:12.5px;height:12.5px;border-color:#c4c4c4"></div>
<div style="position:absolute;left:400.5px;top:6.2px;width:12.3px;height:12px;border:1px solid #cfcfcf;background:#fff"></div>
</div>
<div class="a" style="left:0;top:110.0px;width:1008px;height:1px;background:#dbe7f2;opacity:.8"></div>
</div>
<div class="a" style="left:29.500px;top:590.500px;width:42.500px;height:21.500px;border:2.500px solid #0c76bd"></div>
<div class="a" style="left:1009px;top:590px;width:14px;height:104px;background:#fff"></div>
<svg style="left:1011px;top:595px" width="10" height="6" viewBox="0 0 10 6"><path d="M1 5 L5 1 L9 5" fill="none" stroke="#b4b4b4" stroke-width="1"/></svg>
<svg style="left:1011px;top:683px" width="10" height="6" viewBox="0 0 10 6"><path d="M1 1 L5 5 L9 1" fill="none" stroke="#b4b4b4" stroke-width="1"/></svg>
<div class="a" style="left:1012px;top:604px;width:8px;height:10px;background:#c2c2c2"></div>
<div class="a" style="left:1px;top:694px;width:1022px;height:1px;background:#d0d0d0"></div>
<div class="a" style="left:15px;top:698px;width:863px;height:7px;background:#bdbdbd"></div>
<svg style="left:5px;top:697px" width="6" height="10" viewBox="0 0 6 10"><path d="M5 1 L1 5 L5 9" fill="none" stroke="#aaa" stroke-width="1"/></svg>
<svg style="left:998px;top:697px" width="6" height="10" viewBox="0 0 6 10"><path d="M1 1 L5 5 L1 9" fill="none" stroke="#aaa" stroke-width="1"/></svg>
<div class="a" style="left:1px;top:708px;width:1022px;height:31px;background:#ebebeb"></div>
<div class="a" style="left:77px;top:709px;width:54px;height:22px;background:#fff;border-radius:2px;box-shadow:0 1px 1px #d0d0d0;overflow:hidden"></div>
<div class="a" style="left:86px;top:715.500px;color:#6a6a6a;font-size:11.7px;max-width:44px;overflow:hidden;padding-bottom:4px">Dowód</div>
<div class="a" style="left:135px;top:709px;width:210px;height:22px;background:#fff;border-radius:2px;box-shadow:0 1px 1px #d0d0d0;overflow:hidden"></div>
<div class="a" style="left:143px;top:715.500px;color:#6a6a6a;font-size:11.7px;max-width:201px;overflow:hidden;padding-bottom:4px">Dowód z wymiarami kontrolingowymi</div>
<div class="a" style="left:348px;top:708px;width:141px;height:24px;background:#fff;border:1px solid #2a8fd0;border-top:0;border-radius:0 0 3px 3px;box-shadow:0 1px 0 #1c7fc4"></div>
<div class="a b" style="left:358px;top:715.500px;color:#0a74b8;font-size:10.8px">Harmonogram odpisów</div>
<div class="a" style="left:493px;top:709px;width:85px;height:22px;background:#fff;border-radius:2px;box-shadow:0 1px 1px #d0d0d0;overflow:hidden"></div>
<div class="a" style="left:501px;top:715.500px;color:#6a6a6a;font-size:11.7px;max-width:76px;overflow:hidden;padding-bottom:4px">Dowody RMK</div>
<div class="a" style="left:582px;top:709px;width:202px;height:22px;background:#fff;border-radius:2px;box-shadow:0 1px 1px #d0d0d0;overflow:hidden"></div>
<div class="a" style="left:591px;top:715.500px;color:#6a6a6a;font-size:11.7px;max-width:192px;overflow:hidden;padding-bottom:4px">RMK Analiza Plan Wykonanie Konta</div>
<div class="a" style="left:788px;top:709px;width:101px;height:22px;background:#fff;border-radius:2px;box-shadow:0 1px 1px #d0d0d0;overflow:hidden"></div>
<div class="a" style="left:797px;top:715.500px;color:#6a6a6a;font-size:11.7px;max-width:91px;overflow:hidden;padding-bottom:4px">Historia operacji</div>
<div class="a" style="left:893px;top:709px;width:112px;height:22px;background:#fff;border-radius:2px;box-shadow:0 1px 1px #d0d0d0;overflow:hidden"></div>
<div class="a" style="left:902px;top:715.500px;color:#6a6a6a;font-size:11.7px;max-width:102px;overflow:hidden;padding-bottom:4px">Dowody podłączone</div>
<svg style="left:1011px;top:715px" width="6" height="10" viewBox="0 0 6 10"><path d="M0 0 L6 5 L0 10z" fill="#2a77c0"/></svg>
<svg style="left:62.500px;top:717.500px" width="5" height="8" viewBox="0 0 5 8"><path d="M5 0 L0 4 L5 8z" fill="#b8cfe0"/></svg>
<svg style="left:28px;top:720px" width="9" height="6" viewBox="0 0 9 6"><path d="M1 1 L4.500 4.500 L8 1" fill="none" stroke="#222" stroke-width="1.400"/></svg>
<!--/BOTTOM-->

<!-- DIALOG -->
<!--DIALOG-->
<div class="a" style="left:282.500px;top:310px;width:401.700px;height:263.300px;background:#03a0df;border-radius:3px;box-shadow:0 8px 12px -3px rgba(0,0,0,.55),0 1px 6px rgba(0,0,0,.16)"></div>
<div class="a" style="left:346px;top:313px;width:336px;height:258px;background:#fff"></div>
<div class="a" style="left:346px;top:313px;width:336px;height:35px;background:#f9fafb;border-bottom:1px solid #d3e7f3"></div>
<div class="a" style="left:346px;top:527px;width:336px;height:44px;background:#f9fafb;border-top:1px solid #cde4f0"></div>
<div class="a b" style="left:367px;top:323.500px;font-size:14.2px;color:#111">Rozlicz ostatecznie wzorzec</div>
<svg style="left:659.500px;top:325.500px" width="12" height="12" viewBox="0 0 12 12"><path d="M.8 .8 L11.200 11.200 M11.200 .8 L.8 11.200" fill="none" stroke="#555" stroke-width="1.900"/></svg>
<div class="a" style="left:389px;top:372px;width:271px;height:132px;border:1px solid #e6e6e6"></div>
<div class="a" style="left:407px;top:390.500px;width:239px;height:72.500px;border:1px solid #d6d6d6;border-radius:3px;background:#fff"></div>
<div class="a" style="left:408px;top:391.500px;width:237px;height:13px;background:#e4e4e4;border-radius:2px 2px 0 0"></div>
<div class="a" style="left:413px;top:393px;font-size:11.5px">Wg daty:</div>
<div class="a rad" style="left:413px;top:408px"></div>
<div class="a rad on" style="left:413px;top:426px"></div>
<div class="a rad" style="left:413px;top:445px;border-color:#2a6fb0;border-width:1.500px"></div>
<div class="a" style="left:432px;top:409px">Daty rozliczenia</div>
<div class="a" style="left:432px;top:428px">Daty kolejnej raty z harmonogramu</div>
<div class="a" style="left:432px;top:446px">Daty końcowej raty z&nbsp; harmonogramu</div>
<div class="a" style="left:412px;top:474px">Podaj datę rozliczenia</div>
<div class="a" style="left:531px;top:470px;width:114px;height:20px;background:#ebebeb;border:1px solid #dedede;border-radius:3px"></div>
<div class="a" style="left:536px;top:474px">2018.10.31</div>
<div class="a" style="left:460px;top:537px;width:95px;height:26px;background:#fff;border:1px solid #d2d2d2;border-radius:3px;box-shadow:0 1px 1px #e4e4e4"></div>
<div class="a" style="left:566px;top:537px;width:95px;height:26px;background:#fff;border:1px solid #d2d2d2;border-radius:3px;box-shadow:0 1px 1px #e4e4e4"></div>
<div class="a" style="left:460px;top:544px;width:95px;text-align:center">OK</div>
<div class="a" style="left:566px;top:544px;width:95px;text-align:center">Anuluj</div>
<!--/DIALOG-->

<!--ICONS-->
<svg style="left:64px;top:25.5px" width="8" height="4.5" viewBox="0 0 8 4.5"><path d="M0 0 L4.0 4.5 L8 0" fill="none" stroke="#fff" stroke-width="1.5"/></svg>
<svg style="left:104px;top:22px" width="11" height="12.5" viewBox="0 0 11 12.5"><path d="M5.500 0 L11 5.500 V12.500 H7 V8.500 H4 V12.500 H0 V5.500z" fill="#fff"/></svg>
<svg style="left:712.5px;top:16px" width="11.5" height="10" viewBox="0 0 11.5 10"><rect x="0" y="0" width="4.600" height="4.200" fill="#fff"/><rect x="6.700" y="0" width="4.600" height="4.200" fill="#fff"/><rect x="0" y="5.800" width="4.600" height="4.200" fill="#fff"/><rect x="6.700" y="5.800" width="4.600" height="4.200" fill="#fff"/></svg>
<svg style="left:875px;top:20.5px" width="6.5" height="3.5" viewBox="0 0 6.5 3.5"><path d="M0 0 L3.25 3.5 L6.5 0" fill="none" stroke="#fff" stroke-width="1.2"/></svg>
<svg style="left:896.5px;top:16px" width="11.5" height="14" viewBox="0 0 11.5 14"><path d="M5.750 0 C8.800 0 9.700 2.500 9.700 5 V9 L11.500 11.300 V11.800 H0 V11.300 L1.800 9 V5 C1.800 2.500 2.700 0 5.750 0z" fill="#fff"/><path d="M4.300 12.600 H7.200 A1.450 1.450 0 0 1 4.300 12.600z" fill="#fff"/></svg>
<svg style="left:922px;top:14.5px" width="13.5" height="13.5" viewBox="0 0 13.5 13.5"><path fill-rule="evenodd" d="M13.40 5.59 L13.40 7.91 L11.53 7.82 L10.89 9.38 L12.27 10.63 L10.63 12.27 L9.38 10.89 L7.82 11.53 L7.91 13.40 L5.59 13.40 L5.68 11.53 L4.12 10.89 L2.87 12.27 L1.23 10.63 L2.61 9.38 L1.97 7.82 L0.10 7.91 L0.10 5.59 L1.97 5.68 L2.61 4.12 L1.23 2.87 L2.87 1.23 L4.12 2.61 L5.68 1.97 L5.59 0.10 L7.91 0.10 L7.82 1.97 L9.38 2.61 L10.63 1.23 L12.27 2.87 L10.89 4.12 L11.53 5.68z M4.45 6.75 a2.3 2.3 0 1 0 4.6 0 a2.3 2.3 0 1 0 -4.6 0z" fill="#fff"/></svg>
<svg style="left:938px;top:20.5px" width="7" height="4" viewBox="0 0 7 4"><path d="M0 0 L3.5 4 L7 0" fill="none" stroke="#fff" stroke-width="1.2"/></svg>
<svg style="left:960.5px;top:22.5px" width="9" height="2" viewBox="0 0 9 2"><rect x="0" y="0" width="9" height="1.300" fill="#fff"/></svg>
<svg style="left:985px;top:16px" width="8.5" height="8.5" viewBox="0 0 8.5 8.5"><rect x=".6" y=".6" width="7.300" height="7.300" fill="none" stroke="#fff" stroke-width="1.200"/></svg>
<svg style="left:1008px;top:17.5px" width="8" height="7.5" viewBox="0 0 8 7.5"><path d="M0 0 L8 7.500 M8 0 L0 7.500" stroke="#fff" stroke-width="1.200" fill="none"/></svg>
<svg style="left:7.5px;top:50.3px" width="25" height="19.2" viewBox="0 0 25 19.2"><rect x=".65" y=".65" width="11.7" height="13.899999999999999" rx="1.500" fill="#fff" stroke="#777" stroke-width="1.3"/><circle cx="11.300" cy="11.700" r="4.700" fill="#3aa866" stroke="#fff" stroke-width=".8"/><path d="M11.300 9.200 V14.200 M8.800 11.700 H13.800" stroke="#fff" stroke-width="1.400"/></svg>
<svg style="left:67.3px;top:50.3px" width="24.5" height="19.2" viewBox="0 0 24.5 19.2"><rect x=".65" y=".65" width="11.2" height="13.899999999999999" rx="1.500" fill="#fff" stroke="#d4d4d4" stroke-width="1.3"/><path d="M4 15.500 L14.500 5" stroke="#b9d4ea" stroke-width="2.200" stroke-linecap="round"/><path d="M3.500 16 L4.800 13.700" stroke="#c8c8c8" stroke-width="1"/></svg>
<svg style="left:131.3px;top:50.3px" width="24.5" height="19.2" viewBox="0 0 24.5 19.2"><rect x=".65" y=".65" width="11.2" height="13.899999999999999" rx="1.500" fill="#fff" stroke="#5f5f5f" stroke-width="1.3"/><path d="M6 15.800 L9.500 12.300" stroke="#2a6fb8" stroke-width="1.600"/><circle cx="11.600" cy="10.700" r="3.400" fill="#fff" stroke="#2a6fb8" stroke-width="1.400"/></svg>
<svg style="left:160px;top:50.3px" width="23.5" height="19.2" viewBox="0 0 23.5 19.2"><rect x=".65" y=".65" width="10.2" height="13.899999999999999" rx="1.500" fill="#fff" stroke="#d8d8d8" stroke-width="1.3"/><circle cx="10.500" cy="11.700" r="4.600" fill="#f3bfb2" stroke="#fff" stroke-width=".6"/><path d="M8.800 10 L12.200 13.400 M12.200 10 L8.800 13.400" stroke="#fff" stroke-width="1.300"/></svg>
<svg style="left:185.3px;top:50px" width="17" height="16.5" viewBox="0 0 17 16.5"><rect x="3.500" y=".5" width="10" height="6" rx="1.500" fill="#fff" stroke="#6a6a6a" stroke-width="1.300"/><rect x="4.800" y="2.300" width="7.400" height="3.700" fill="#3a78c4"/><rect x="0" y="5.500" width="17" height="7.500" rx="1.800" fill="#717171"/><rect x="4" y="9.500" width="9" height="7" fill="#fff" stroke="#6a6a6a" stroke-width="1"/><rect x="6" y="12" width="5" height="1.300" fill="#9cc0e6"/><rect x="6" y="14" width="5" height="1" fill="#9cc0e6"/></svg>
<svg style="left:211.3px;top:56px" width="7" height="3.8" viewBox="0 0 7 3.8"><path d="M0 0 L3.5 3.8 L7 0" fill="none" stroke="#2d5f9e" stroke-width="1.4"/></svg>
<svg style="left:231px;top:50px" width="17" height="17" viewBox="0 0 17 17"><path d="M12.300 5.200 L5.600 11.700 a1.550 1.550 0 0 0 2.200 2.200 L15.300 6.600 a3.100 3.100 0 0 0 -4.400 -4.400 L2.600 10.300 a4.500 4.500 0 0 0 6.400 6.400" transform="translate(-.5 -1.200) scale(.98)" fill="none" stroke="#4a86c6" stroke-width="1.400" stroke-linecap="round"/></svg>
<svg style="left:260px;top:50.3px" width="24.5" height="19.2" viewBox="0 0 24.5 19.2"><rect x=".65" y=".65" width="11.2" height="13.899999999999999" rx="1.500" fill="#fff" stroke="#6e6e6e" stroke-width="1.3"/><path d="M10.800 6 H15.200 L12.700 9.800 H15.800 L7.300 16.800 L9.700 11.800 H6.300z" fill="#f4a11f" stroke="#fff" stroke-width=".7"/></svg>
<svg style="left:331px;top:56.3px" width="6.8" height="3.8" viewBox="0 0 6.8 3.8"><path d="M0 0 L3.4 3.8 L6.8 0" fill="none" stroke="#2d5f9e" stroke-width="1.4"/></svg>
<svg style="left:351px;top:50.3px" width="25" height="19.2" viewBox="0 0 25 19.2"><rect x=".65" y=".65" width="11.7" height="13.899999999999999" rx="1.500" fill="#fff" stroke="#6e6e6e" stroke-width="1.3"/><circle cx="11.400" cy="11.700" r="5.600" fill="#fff"/><path fill-rule="evenodd" d="M16.13 10.87 L16.13 12.53 L14.82 12.46 L14.36 13.58 L15.33 14.46 L14.16 15.63 L13.28 14.66 L12.16 15.12 L12.23 16.43 L10.57 16.43 L10.64 15.12 L9.52 14.66 L8.64 15.63 L7.47 14.46 L8.44 13.58 L7.98 12.46 L6.67 12.53 L6.67 10.87 L7.98 10.94 L8.44 9.82 L7.47 8.94 L8.64 7.77 L9.52 8.74 L10.64 8.28 L10.57 6.97 L12.23 6.97 L12.16 8.28 L13.28 8.74 L14.16 7.77 L15.33 8.94 L14.36 9.82 L14.82 10.94z M9.80 11.70 a1.6 1.6 0 1 0 3.2 0 a1.6 1.6 0 1 0 -3.2 0z" fill="#555"/></svg>
<svg style="left:428.5px;top:56.3px" width="6.8" height="3.8" viewBox="0 0 6.8 3.8"><path d="M0 0 L3.4 3.8 L6.8 0" fill="none" stroke="#2d5f9e" stroke-width="1.4"/></svg>
<svg style="left:730.3px;top:49.5px" width="17.5" height="17.5" viewBox="0 0 17.5 17.5"><path d="M.6 0 V16.700 H17.500" fill="none" stroke="#8a8a8a" stroke-width="1.200"/><rect x="2.700" y="8" width="4" height="8.200" fill="#6cc070"/><rect x="7.700" y="1.800" width="4.500" height="14.400" fill="#fbc115"/><rect x="13" y="5" width="4" height="11.200" fill="#8b57c9"/></svg>
<svg style="left:752.8px;top:55.8px" width="7" height="3.8" viewBox="0 0 7 3.8"><path d="M0 0 L3.5 3.8 L7 0" fill="none" stroke="#2d5f9e" stroke-width="1.4"/></svg>
<svg style="left:772.6px;top:50.2px" width="17.5" height="16.8" viewBox="0 0 17.5 16.8"><rect x="5" y=".6" width="12" height="10.500" fill="#fff" stroke="#6e6e6e" stroke-width="1.100"/><rect x="4.500" y="0" width="13" height="2.600" fill="#2f6fc0"/><rect x=".6" y="5.400" width="12" height="10.700" fill="#fff" stroke="#6e6e6e" stroke-width="1.100"/><rect x="0" y="4.800" width="13.200" height="2.800" fill="#2f6fc0"/></svg>
<svg style="left:846px;top:56px" width="6.8" height="3.8" viewBox="0 0 6.8 3.8"><path d="M0 0 L3.4 3.8 L6.8 0" fill="none" stroke="#2d5f9e" stroke-width="1.4"/></svg>
<svg style="left:865.8px;top:51px" width="17" height="15.5" viewBox="0 0 17 15.5"><rect x=".6" y=".6" width="15.800" height="14.300" fill="#fff" stroke="#7a7a7a" stroke-width="1.100"/><rect x="1.200" y="3" width="3.300" height="11.400" fill="#cfe4f6"/><rect x="0" y="0" width="17" height="2.700" fill="#2f6fc0"/><path d="M13.500 8.700 H7 M9.700 5.700 L6.500 8.700 L9.700 11.700" fill="none" stroke="#444" stroke-width="1.600"/></svg>
<svg style="left:889px;top:56px" width="6.5" height="3.8" viewBox="0 0 6.5 3.8"><path d="M0 0 L3.25 3.8 L6.5 0" fill="none" stroke="#2d5f9e" stroke-width="1.4"/></svg>
<svg style="left:907px;top:51px" width="21" height="16.5" viewBox="0 0 21 16.5"><rect x=".6" y=".6" width="15.800" height="14.300" fill="#fff" stroke="#7a7a7a" stroke-width="1.100"/><rect x="0" y="0" width="17" height="2.700" fill="#2f6fc0"/><path fill-rule="evenodd" d="M12.53 8.01 L12.53 9.59 L11.22 9.52 L10.79 10.57 L11.76 11.45 L10.65 12.56 L9.77 11.59 L8.72 12.02 L8.79 13.33 L7.21 13.33 L7.28 12.02 L6.23 11.59 L5.35 12.56 L4.24 11.45 L5.21 10.57 L4.78 9.52 L3.47 9.59 L3.47 8.01 L4.78 8.08 L5.21 7.03 L4.24 6.15 L5.35 5.04 L6.23 6.01 L7.28 5.58 L7.21 4.27 L8.79 4.27 L8.72 5.58 L9.77 6.01 L10.65 5.04 L11.76 6.15 L10.79 7.03 L11.22 8.08z M6.40 8.80 a1.6 1.6 0 1 0 3.2 0 a1.6 1.6 0 1 0 -3.2 0z" fill="#777"/><path d="M14.800 5.800 L21 16.500 H8.600z" fill="#f5a623"/><rect x="14.200" y="9.500" width="1.300" height="3.800" fill="#333"/><rect x="14.200" y="14" width="1.300" height="1.300" fill="#333"/></svg>
<svg style="left:934.5px;top:56px" width="6.8" height="3.8" viewBox="0 0 6.8 3.8"><path d="M0 0 L3.4 3.8 L6.8 0" fill="none" stroke="#2d5f9e" stroke-width="1.4"/></svg>
<svg style="left:955.4px;top:49.8px" width="17" height="17" viewBox="0 0 17 17"><path d="M15.700 8 A7.200 7.200 0 0 0 1.800 6 M1.300 9 A7.200 7.200 0 0 0 15.200 11" fill="none" stroke="#38ab74" stroke-width="2.200"/><path d="M1.100 .5 V6.600 H7.200 M15.900 16.500 V10.400 H9.800" fill="none" stroke="#38ab74" stroke-width="2.200"/></svg>
<svg style="left:987.9px;top:50.1px" width="16.4" height="16.4" viewBox="0 0 16.4 16.4"><circle cx="8.200" cy="8.200" r="8.200" fill="#2d6bb4"/><text x="8.200" y="12.600" font-family="Liberation Sans,sans-serif" font-weight="bold" font-size="12.500" fill="#fff" text-anchor="middle">?</text></svg>
<svg style="left:1009.6px;top:56.5px" width="6.6" height="3.6" viewBox="0 0 6.6 3.6"><path d="M0 0 L3.3 3.6 L6.6 0" fill="none" stroke="#2d5f9e" stroke-width="1.4"/></svg>
<svg style="left:7px;top:81.6px" width="17" height="15.5" viewBox="0 0 17 15.5"><path d="M11.400 4.500 V2 a1.300 1.300 0 0 0 -1.300 -1.300 H1.950 a1.300 1.300 0 0 0 -1.300 1.300 V13.500 a1.300 1.300 0 0 0 1.300 1.300 H10.100 a1.300 1.300 0 0 0 1.300 -1.300 V11.500" fill="#fff" stroke="#666" stroke-width="1.300"/><path d="M6.500 8 H15.500 M12.200 4.600 L15.800 8 L12.200 11.400" fill="none" stroke="#8a43c6" stroke-width="2"/></svg>
<svg style="left:139px;top:81.6px" width="18" height="16" viewBox="0 0 18 16"><path d="M.65 .65 H8.500 L12.300 4.500 V14.600 H.65z" fill="#fff" stroke="#666" stroke-width="1.300" stroke-linejoin="round"/><path d="M8.300 1 V4.800 H12" fill="#ddd" stroke="#888" stroke-width="1"/><rect x="6" y="9" width="8" height="7" fill="#fff"/><path d="M7.500 12.300 H16 M13 9 L16.600 12.300 L13 15.600" fill="none" stroke="#1f6cc0" stroke-width="1.900"/></svg>
<svg style="left:316.3px;top:81px" width="24.8" height="19.5" viewBox="0 0 24.8 19.5"><rect x=".65" y=".65" width="11.5" height="14.2" rx="1.500" fill="#fff" stroke="#777" stroke-width="1.3"/><path fill-rule="evenodd" d="M9.15 5.42 L9.15 6.58 L8.14 6.52 L7.83 7.29 L8.58 7.96 L7.76 8.78 L7.09 8.03 L6.32 8.34 L6.38 9.35 L5.22 9.35 L5.28 8.34 L4.51 8.03 L3.84 8.78 L3.02 7.96 L3.77 7.29 L3.46 6.52 L2.45 6.58 L2.45 5.42 L3.46 5.48 L3.77 4.71 L3.02 4.04 L3.84 3.22 L4.51 3.97 L5.28 3.66 L5.22 2.65 L6.38 2.65 L6.32 3.66 L7.09 3.97 L7.76 3.22 L8.58 4.04 L7.83 4.71 L8.14 5.48z M4.70 6.00 a1.1 1.1 0 1 0 2.2 0 a1.1 1.1 0 1 0 -2.2 0z" fill="#666"/><circle cx="11.600" cy="12" r="5.300" fill="#fff"/><path fill-rule="evenodd" d="M16.23 11.19 L16.23 12.81 L14.92 12.74 L14.47 13.82 L15.45 14.70 L14.30 15.85 L13.42 14.87 L12.34 15.32 L12.41 16.63 L10.79 16.63 L10.86 15.32 L9.78 14.87 L8.90 15.85 L7.75 14.70 L8.73 13.82 L8.28 12.74 L6.97 12.81 L6.97 11.19 L8.28 11.26 L8.73 10.18 L7.75 9.30 L8.90 8.15 L9.78 9.13 L10.86 8.68 L10.79 7.37 L12.41 7.37 L12.34 8.68 L13.42 9.13 L14.30 8.15 L15.45 9.30 L14.47 10.18 L14.92 11.26z M10.00 12.00 a1.6 1.6 0 1 0 3.2 0 a1.6 1.6 0 1 0 -3.2 0z" fill="#2f9e5e"/></svg>
<svg style="left:985.5px;top:97.5px" width="8.5" height="5" viewBox="0 0 8.5 5"><path d="M.5 4.500 L4.250 .8 L8 4.500" fill="none" stroke="#2a6fb8" stroke-width="1.400"/></svg>
<svg style="left:985.5px;top:181px" width="8.5" height="5" viewBox="0 0 8.5 5"><path d="M.5 .5 L4.250 4.200 L8 .5" fill="none" stroke="#2a6fb8" stroke-width="1.400"/></svg>
<svg style="left:985.5px;top:533px" width="8.5" height="5" viewBox="0 0 8.5 5"><path d="M.5 .5 L4.250 4.200 L8 .5" fill="none" stroke="#2a6fb8" stroke-width="1.400"/></svg>
<svg style="left:8px;top:484.3px" width="24.5" height="19.2" viewBox="0 0 24.5 19.2"><rect x=".65" y=".65" width="11.2" height="13.899999999999999" rx="1.500" fill="#fff" stroke="#d4d4d4" stroke-width="1.3"/><path d="M4 15.500 L14.500 5" stroke="#b9d4ea" stroke-width="2.200" stroke-linecap="round"/></svg>
<svg style="left:71px;top:484.3px" width="17" height="16.5" viewBox="0 0 17 16.5"><rect x="3.500" y=".5" width="10" height="6" rx="1.500" fill="#fff" stroke="#6a6a6a" stroke-width="1.300"/><rect x="4.800" y="2.300" width="7.400" height="3.700" fill="#3a78c4"/><rect x="0" y="5.500" width="17" height="7.500" rx="1.800" fill="#717171"/><rect x="4" y="9.500" width="9" height="7" fill="#fff" stroke="#6a6a6a" stroke-width="1"/><rect x="6" y="12" width="5" height="1.300" fill="#9cc0e6"/><rect x="6" y="14" width="5" height="1" fill="#9cc0e6"/></svg>
<svg style="left:97px;top:490.5px" width="6.8" height="3.8" viewBox="0 0 6.8 3.8"><path d="M0 0 L3.4 3.8 L6.8 0" fill="none" stroke="#2d5f9e" stroke-width="1.4"/></svg>
<svg style="left:117.5px;top:485px" width="25" height="19.2" viewBox="0 0 25 19.2"><rect x=".65" y=".65" width="11.7" height="13.899999999999999" rx="1.500" fill="#fff" stroke="#6e6e6e" stroke-width="1.3"/><circle cx="11.400" cy="11.700" r="5.600" fill="#fff"/><path fill-rule="evenodd" d="M16.13 10.87 L16.13 12.53 L14.82 12.46 L14.36 13.58 L15.33 14.46 L14.16 15.63 L13.28 14.66 L12.16 15.12 L12.23 16.43 L10.57 16.43 L10.64 15.12 L9.52 14.66 L8.64 15.63 L7.47 14.46 L8.44 13.58 L7.98 12.46 L6.67 12.53 L6.67 10.87 L7.98 10.94 L8.44 9.82 L7.47 8.94 L8.64 7.77 L9.52 8.74 L10.64 8.28 L10.57 6.97 L12.23 6.97 L12.16 8.28 L13.28 8.74 L14.16 7.77 L15.33 8.94 L14.36 9.82 L14.82 10.94z M9.80 11.70 a1.6 1.6 0 1 0 3.2 0 a1.6 1.6 0 1 0 -3.2 0z" fill="#555"/></svg>
<svg style="left:196px;top:490.5px" width="6.8" height="3.8" viewBox="0 0 6.8 3.8"><path d="M0 0 L3.4 3.8 L6.8 0" fill="none" stroke="#2d5f9e" stroke-width="1.4"/></svg>
<svg style="left:838px;top:485px" width="17.5" height="17.5" viewBox="0 0 17.5 17.5"><path d="M.6 0 V16.700 H17.500" fill="none" stroke="#8a8a8a" stroke-width="1.200"/><rect x="2.700" y="8" width="4" height="8.200" fill="#6cc070"/><rect x="7.700" y="1.800" width="4.500" height="14.400" fill="#fbc115"/><rect x="13" y="5" width="4" height="11.200" fill="#8b57c9"/></svg>
<svg style="left:860.3px;top:490.8px" width="6.8" height="3.8" viewBox="0 0 6.8 3.8"><path d="M0 0 L3.4 3.8 L6.8 0" fill="none" stroke="#2d5f9e" stroke-width="1.4"/></svg>
<svg style="left:879.3px;top:484.6px" width="18" height="17" viewBox="0 0 18 17"><path d="M9 13 H.6 V.6 H16.200 V7" fill="none" stroke="#6e6e6e" stroke-width="1.100"/><rect x="0" y="0" width="16.800" height="2.600" fill="#2f6fc0"/><rect x="11" y=".8" width="1.500" height="1" fill="#fff"/><rect x="13.500" y=".8" width="1.500" height="1" fill="#fff"/><circle cx="14" cy="10" r="3.300" fill="#fff" stroke="#2a6fb8" stroke-width="1.400"/><path d="M11.700 12.400 L8.700 15.900" stroke="#2a6fb8" stroke-width="1.800"/></svg>
<svg style="left:955.4px;top:484.3px" width="17" height="17" viewBox="0 0 17 17"><path d="M15.700 8 A7.200 7.200 0 0 0 1.800 6 M1.300 9 A7.200 7.200 0 0 0 15.200 11" fill="none" stroke="#38ab74" stroke-width="2.200"/><path d="M1.100 .5 V6.600 H7.200 M15.900 16.500 V10.400 H9.800" fill="none" stroke="#38ab74" stroke-width="2.200"/></svg>
<svg style="left:988.2px;top:485.2px" width="16.4" height="16.4" viewBox="0 0 16.4 16.4"><circle cx="8.200" cy="8.200" r="8.200" fill="#2d6bb4"/><text x="8.200" y="12.600" font-family="Liberation Sans,sans-serif" font-weight="bold" font-size="12.500" fill="#fff" text-anchor="middle">?</text></svg>
<svg style="left:1010.5px;top:490.5px" width="6.6" height="3.6" viewBox="0 0 6.6 3.6"><path d="M0 0 L3.3 3.6 L6.6 0" fill="none" stroke="#2d5f9e" stroke-width="1.4"/></svg>
<svg style="left:8px;top:516px" width="24.8" height="19.5" viewBox="0 0 24.8 19.5"><rect x=".65" y=".65" width="11.5" height="14.2" rx="1.500" fill="#fff" stroke="#777" stroke-width="1.3"/><path fill-rule="evenodd" d="M9.15 5.42 L9.15 6.58 L8.14 6.52 L7.83 7.29 L8.58 7.96 L7.76 8.78 L7.09 8.03 L6.32 8.34 L6.38 9.35 L5.22 9.35 L5.28 8.34 L4.51 8.03 L3.84 8.78 L3.02 7.96 L3.77 7.29 L3.46 6.52 L2.45 6.58 L2.45 5.42 L3.46 5.48 L3.77 4.71 L3.02 4.04 L3.84 3.22 L4.51 3.97 L5.28 3.66 L5.22 2.65 L6.38 2.65 L6.32 3.66 L7.09 3.97 L7.76 3.22 L8.58 4.04 L7.83 4.71 L8.14 5.48z M4.70 6.00 a1.1 1.1 0 1 0 2.2 0 a1.1 1.1 0 1 0 -2.2 0z" fill="#666"/><circle cx="11.600" cy="12" r="5.300" fill="#fff"/><path fill-rule="evenodd" d="M16.23 11.19 L16.23 12.81 L14.92 12.74 L14.47 13.82 L15.45 14.70 L14.30 15.85 L13.42 14.87 L12.34 15.32 L12.41 16.63 L10.79 16.63 L10.86 15.32 L9.78 14.87 L8.90 15.85 L7.75 14.70 L8.73 13.82 L8.28 12.74 L6.97 12.81 L6.97 11.19 L8.28 11.26 L8.73 10.18 L7.75 9.30 L8.90 8.15 L9.78 9.13 L10.86 8.68 L10.79 7.37 L12.41 7.37 L12.34 8.68 L13.42 9.13 L14.30 8.15 L15.45 9.30 L14.47 10.18 L14.92 11.26z M10.00 12.00 a1.6 1.6 0 1 0 3.2 0 a1.6 1.6 0 1 0 -3.2 0z" fill="#2f9e5e"/></svg>
<svg style="left:147px;top:516px" width="24.8" height="19.5" viewBox="0 0 24.8 19.5"><rect x=".65" y=".65" width="11.5" height="14.2" rx="1.500" fill="#fff" stroke="#777" stroke-width="1.3"/><path fill-rule="evenodd" d="M9.15 5.42 L9.15 6.58 L8.14 6.52 L7.83 7.29 L8.58 7.96 L7.76 8.78 L7.09 8.03 L6.32 8.34 L6.38 9.35 L5.22 9.35 L5.28 8.34 L4.51 8.03 L3.84 8.78 L3.02 7.96 L3.77 7.29 L3.46 6.52 L2.45 6.58 L2.45 5.42 L3.46 5.48 L3.77 4.71 L3.02 4.04 L3.84 3.22 L4.51 3.97 L5.28 3.66 L5.22 2.65 L6.38 2.65 L6.32 3.66 L7.09 3.97 L7.76 3.22 L8.58 4.04 L7.83 4.71 L8.14 5.48z M4.70 6.00 a1.1 1.1 0 1 0 2.2 0 a1.1 1.1 0 1 0 -2.2 0z" fill="#666"/><circle cx="11.600" cy="12" r="5.300" fill="#fff"/><path fill-rule="evenodd" d="M16.23 11.19 L16.23 12.81 L14.92 12.74 L14.47 13.82 L15.45 14.70 L14.30 15.85 L13.42 14.87 L12.34 15.32 L12.41 16.63 L10.79 16.63 L10.86 15.32 L9.78 14.87 L8.90 15.85 L7.75 14.70 L8.73 13.82 L8.28 12.74 L6.97 12.81 L6.97 11.19 L8.28 11.26 L8.73 10.18 L7.75 9.30 L8.90 8.15 L9.78 9.13 L10.86 8.68 L10.79 7.37 L12.41 7.37 L12.34 8.68 L13.42 9.13 L14.30 8.15 L15.45 9.30 L14.47 10.18 L14.92 11.26z M10.00 12.00 a1.6 1.6 0 1 0 3.2 0 a1.6 1.6 0 1 0 -3.2 0z" fill="#2f9e5e"/></svg>
<svg style="left:7px;top:715px" width="16.5" height="17" viewBox="0 0 16.5 17"><path d="M.9 3 V11.200 H15.500" fill="none" stroke="#3a76c0" stroke-width="1.400"/><rect x=".2" y="11.500" width="6.800" height="5" fill="#3a76c0"/><rect x="8.400" y="14" width="2.700" height="2.200" fill="#c4c4c4"/><rect x="12.800" y="14" width="2.700" height="2.200" fill="#c4c4c4"/><circle cx="10.400" cy="4.700" r="3.600" fill="#fff" stroke="#3a76c0" stroke-width="1.600"/><path d="M13 7.300 L15.600 9.600" stroke="#3a76c0" stroke-width="1.800"/></svg>
<svg style="left:242.7px;top:125.7px" width="9" height="10" viewBox="0 0 9 10"><rect x=".6" y="1.400" width="7.800" height="8" rx=".8" fill="none" stroke="#222" stroke-width="1.200"/><rect x=".6" y="1.400" width="7.800" height="2.200" fill="#222"/><rect x="1.800" y="0" width="1.200" height="2" fill="#222"/><rect x="6" y="0" width="1.200" height="2" fill="#222"/><rect x="5" y="5.800" width="2.200" height="2.200" fill="#222"/></svg>
<svg style="left:242.7px;top:148.9px" width="9" height="10" viewBox="0 0 9 10"><rect x=".6" y="1.400" width="7.800" height="8" rx=".8" fill="none" stroke="#222" stroke-width="1.200"/><rect x=".6" y="1.400" width="7.800" height="2.200" fill="#222"/><rect x="1.800" y="0" width="1.200" height="2" fill="#222"/><rect x="6" y="0" width="1.200" height="2" fill="#222"/><rect x="5" y="5.800" width="2.200" height="2.200" fill="#222"/></svg>
<svg style="left:135px;top:129.3px" width="6.8" height="3.6" viewBox="0 0 6.8 3.6"><path d="M0 0 L3.4 3.6 L6.8 0" fill="none" stroke="#333" stroke-width="1.3"/></svg>
<svg style="left:135px;top:153px" width="6.8" height="3.6" viewBox="0 0 6.8 3.6"><path d="M0 0 L3.4 3.6 L6.8 0" fill="none" stroke="#333" stroke-width="1.3"/></svg>
<svg style="left:900.5px;top:129.3px" width="6.5" height="3.5" viewBox="0 0 6.5 3.5"><path d="M0 0 L3.25 3.5 L6.5 0" fill="none" stroke="#999" stroke-width="1.1"/></svg>
<svg style="left:289.5px;top:125px" width="6.5" height="12" viewBox="0 0 6.5 12"><path d="M.5 .8 L6 4.300 L.5 7.800 M.5 11.500 L6 7.300" fill="none" stroke="#7ab4e4" stroke-width="1.300"/></svg>
<svg style="left:920.1px;top:122.4px" width="11" height="9" viewBox="0 0 11 9"><path d="M.7 4.700 L3.900 8 L10.400 .7" fill="none" stroke="#1d4f91" stroke-width="1.5"/></svg>
<svg style="left:920.1px;top:137.4px" width="11" height="9" viewBox="0 0 11 9"><path d="M.7 4.700 L3.900 8 L10.400 .7" fill="none" stroke="#1d4f91" stroke-width="1.5"/></svg>
<svg style="left:920.1px;top:152.4px" width="11" height="9" viewBox="0 0 11 9"><path d="M.7 4.700 L3.900 8 L10.400 .7" fill="none" stroke="#1d4f91" stroke-width="1.5"/></svg>
<svg style="left:920.1px;top:167.4px" width="11" height="9" viewBox="0 0 11 9"><path d="M.7 4.700 L3.900 8 L10.400 .7" fill="none" stroke="#1d4f91" stroke-width="1.5"/></svg>
<svg style="left:628.2px;top:123px" width="11" height="9" viewBox="0 0 11 9"><path d="M.7 4.700 L3.900 8 L10.400 .7" fill="none" stroke="#8cbce6" stroke-width="1.2"/></svg>
<svg style="left:628.2px;top:138px" width="11" height="9" viewBox="0 0 11 9"><path d="M.7 4.700 L3.900 8 L10.400 .7" fill="none" stroke="#8cbce6" stroke-width="1.2"/></svg>
<svg style="left:125.5px;top:208.3px" width="12" height="12" viewBox="0 0 12 12"><path d="M3.500 9 V1.600 M.6 4.400 L3.500 1.500 L6.400 4.400" fill="none" stroke="#2e9e5b" stroke-width="1.600"/><text x="6.300" y="11.700" font-size="6.500" font-family="Liberation Sans,sans-serif" fill="#333">1</text></svg>
<svg style="left:168px;top:208.3px" width="12" height="12" viewBox="0 0 12 12"><path d="M3.500 9 V1.600 M.6 4.400 L3.500 1.500 L6.400 4.400" fill="none" stroke="#2e9e5b" stroke-width="1.600"/><text x="6.300" y="11.700" font-size="6.500" font-family="Liberation Sans,sans-serif" fill="#333">2</text></svg>
<svg style="left:220.5px;top:208.3px" width="12" height="12" viewBox="0 0 12 12"><path d="M3.500 9 V1.600 M.6 4.400 L3.500 1.500 L6.400 4.400" fill="none" stroke="#2e9e5b" stroke-width="1.600"/><text x="6.300" y="11.700" font-size="6.500" font-family="Liberation Sans,sans-serif" fill="#333">3</text></svg>
<div class="a" style="left:120px;top:205px;width:1px;height:15px;background:#dcdcdc"></div>
<div class="a" style="left:162px;top:205px;width:1px;height:15px;background:#dcdcdc"></div>
<div class="a" style="left:215px;top:205px;width:1px;height:15px;background:#dcdcdc"></div>
<svg style="left:301.1px;top:323px" width="32" height="34" viewBox="0 0 32 34"><path d="M24.900 12.200 V4 a2 2 0 0 0 -2 -2 H9.500 L2.200 9.500 V29.500 a2 2 0 0 0 2 2 H22.900 a2 2 0 0 0 2 -2 V28.600" fill="none" stroke="#fff" stroke-width="2"/><path d="M9.800 2.600 V7.300 a2 2 0 0 1 -2 2 H2.800" fill="none" stroke="#fff" stroke-width="1.600"/><circle cx="21.700" cy="20.600" r="5.500" fill="none" stroke="#fff" stroke-width="1.900"/><path d="M27.90 20.60 L30.50 20.60" stroke="#fff" stroke-width="2.300"/><path d="M26.08 24.98 L27.92 26.82" stroke="#fff" stroke-width="2.300"/><path d="M21.70 26.80 L21.70 29.40" stroke="#fff" stroke-width="2.300"/><path d="M17.32 24.98 L15.48 26.82" stroke="#fff" stroke-width="2.300"/><path d="M15.50 20.60 L12.90 20.60" stroke="#fff" stroke-width="2.300"/><path d="M17.32 16.22 L15.48 14.38" stroke="#fff" stroke-width="2.300"/><path d="M21.70 14.40 L21.70 11.80" stroke="#fff" stroke-width="2.300"/><path d="M26.08 16.22 L27.92 14.38" stroke="#fff" stroke-width="2.300"/></svg>
<svg style="left:630.5px;top:474.5px" width="10.5" height="10.5" viewBox="0 0 10.5 10.5"><rect x=".6" y="1.500" width="9.300" height="8.400" rx=".8" fill="none" stroke="#9a9a9a" stroke-width="1.100"/><rect x=".6" y="1.500" width="9.300" height="2" fill="#9a9a9a"/><rect x="2.300" y="0" width="1.100" height="2" fill="#9a9a9a"/><rect x="7" y="0" width="1.100" height="2" fill="#9a9a9a"/><rect x="6" y="6" width="2" height="2" fill="#9a9a9a"/></svg>
<svg style="left:372px;top:542px" width="17.5" height="16" viewBox="0 0 17.5 16"><rect x=".6" y=".6" width="16.300" height="14.800" fill="#fff" stroke="#6e6e6e" stroke-width="1.100"/><rect x="0" y="0" width="17.500" height="2.800" fill="#2f6fc0"/><path fill-rule="evenodd" d="M13.08 8.44 L13.08 9.96 L11.78 9.88 L11.37 10.86 L12.35 11.73 L11.28 12.80 L10.41 11.82 L9.43 12.23 L9.51 13.53 L7.99 13.53 L8.07 12.23 L7.09 11.82 L6.22 12.80 L5.15 11.73 L6.13 10.86 L5.72 9.88 L4.42 9.96 L4.42 8.44 L5.72 8.52 L6.13 7.54 L5.15 6.67 L6.22 5.60 L7.09 6.58 L8.07 6.17 L7.99 4.87 L9.51 4.87 L9.43 6.17 L10.41 6.58 L11.28 5.60 L12.35 6.67 L11.37 7.54 L11.78 8.52z M7.25 9.20 a1.5 1.5 0 1 0 3.0 0 a1.5 1.5 0 1 0 -3.0 0z" fill="#555"/></svg>
<svg style="left:400px;top:548px" width="7" height="3.8" viewBox="0 0 7 3.8"><path d="M0 0 L3.5 3.8 L7 0" fill="none" stroke="#2d5f9e" stroke-width="1.4"/></svg>
<!--/ICONS-->

<!-- window border -->
<div class="a" style="left:0;top:0;width:1px;height:740px;background:#04a0df"></div>
<div class="a" style="left:1023px;top:0;width:1px;height:740px;background:#04a0df"></div>
<div class="a" style="left:0;top:739px;width:1024px;height:1px;background:#04a0df"></div>
</body>
</html>
